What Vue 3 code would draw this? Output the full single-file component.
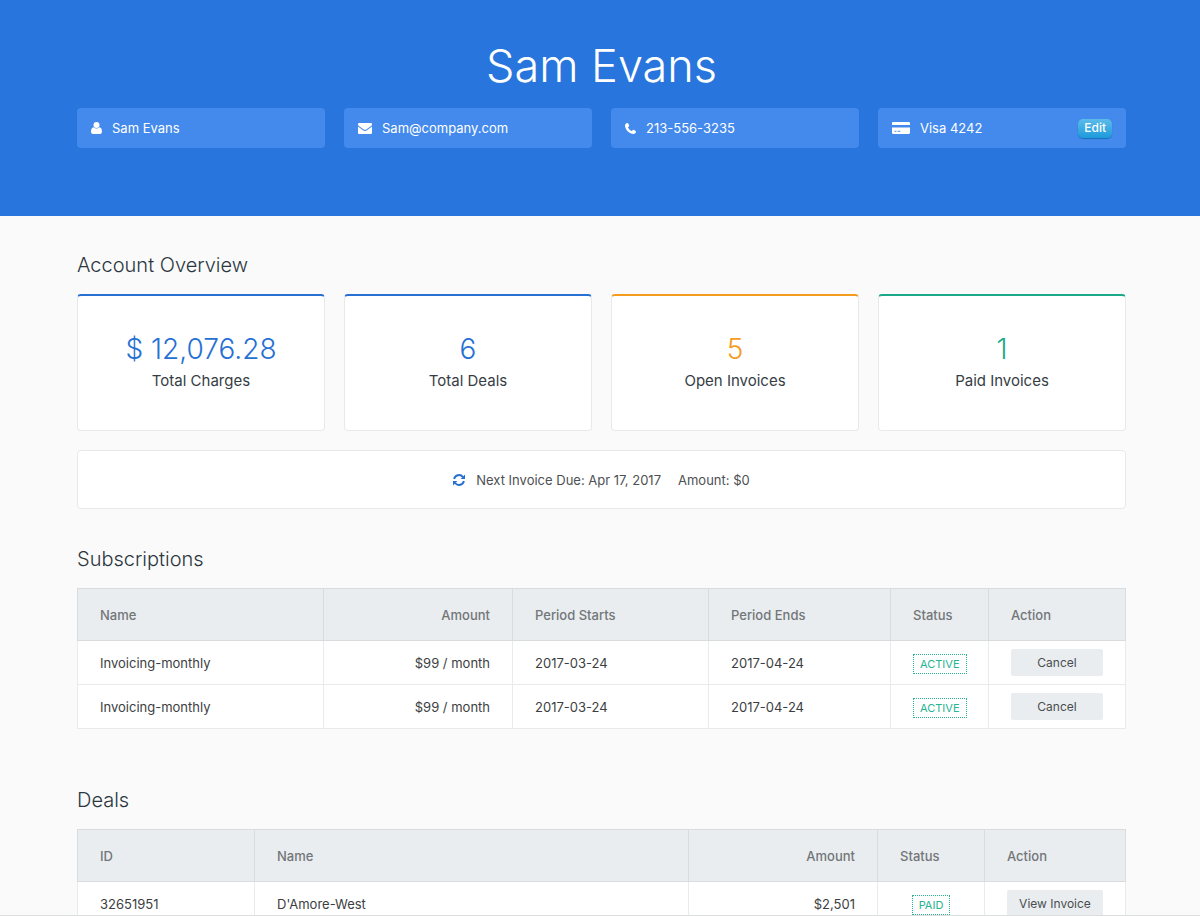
<script setup>
const stats = [
  { value: '$ 12,076.28', label: 'Total Charges', tone: 'blue' },
  { value: '6', label: 'Total Deals', tone: 'blue' },
  { value: '5', label: 'Open Invoices', tone: 'orange' },
  { value: '1', label: 'Paid Invoices', tone: 'green' },
]
const subscriptions = [
  { id: 1, name: 'Invoicing-monthly', amount: '$99 / month', starts: '2017-03-24', ends: '2017-04-24', status: 'ACTIVE' },
  { id: 2, name: 'Invoicing-monthly', amount: '$99 / month', starts: '2017-03-24', ends: '2017-04-24', status: 'ACTIVE' },
]
const deals = [{ id: '32651951', name: "D'Amore-West", amount: '$2,501', status: 'PAID' }]
</script>

<template>
  <div class="page">
    <header class="hero">
      <h1>Sam Evans</h1>
      <ul class="contacts">
        <li>
          <svg class="user" viewBox="0 0 11 12" aria-hidden="true">
            <circle cx="5.5" cy="3" r="3" />
            <path d="M2.6 5.2C1 5.5 0 7 0 9.6 0 11 .8 12 2 12h7c1.200 0 2-1 2-2.400 0-2.600-1-4.100-2.600-4.400a4.200 4.200 0 0 1-5.800 0z" />
          </svg>
          <span>Sam Evans</span>
        </li>
        <li>
          <svg class="mail" viewBox="0 0 14 11" aria-hidden="true">
            <path d="M1.200 0h11.600C13.500 0 14 .5 14 1.200c0 .9-.7 1.700-1.300 2.100L8.300 6.400c-.8.600-1.800.6-2.600 0L1.300 3.300C.7 2.900 0 2.100 0 1.300 0 .5.500 0 1.200 0zM0 3.600l5 3.600c1.200.9 2.800.9 4 0l5-3.600v6.100c0 .7-.6 1.300-1.300 1.300H1.300C.6 11 0 10.400 0 9.700z" />
          </svg>
          <span>Sam@company.com</span>
        </li>
        <li>
          <svg class="phone" viewBox="0 0 11 11" aria-hidden="true">
            <path d="M2.500 0C1.300.2 0 1 0 2.500c0 2 1.200 4.200 2.600 5.700C4.200 9.800 6.500 11 8.500 11c1.500 0 2.300-1.300 2.500-2.500 0-.3-.1-.4-.4-.6L8.600 6.800c-.5-.3-.7 0-1 .4-.3.300-.6.900-1 .8C5.400 7.500 3.500 5.600 3 4.400c-.1-.4.500-.7.800-1 .4-.3.600-.5.400-1L3.100.3C2.900.1 2.800 0 2.500 0z" />
          </svg>
          <span>213-556-3235</span>
        </li>
        <li>
          <svg class="card-icon" viewBox="0 0 18 12" aria-hidden="true">
            <path fill-rule="evenodd" d="M1.200 0h15.600C17.500 0 18 .5 18 1.200V3H0V1.200C0 .5.500 0 1.200 0zM0 5.500h18v5.300c0 .7-.5 1.200-1.200 1.200H1.200C.5 12 0 11.500 0 10.800zM2.500 8.700v1h2v-1zm3.200 0v1h2.600v-1z" />
          </svg>
          <span>Visa 4242</span>
          <button type="button" class="edit">Edit</button>
        </li>
      </ul>
    </header>

    <main>
      <h2>Account Overview</h2>
      <section class="stats" aria-label="Account totals">
        <article v-for="s in stats" :key="s.label" class="stat" :class="s.tone">
          <strong>{{ s.value }}</strong>
          <span>{{ s.label }}</span>
        </article>
      </section>
      <p class="next">
        <svg viewBox="0 0 12 12" aria-hidden="true">
          <path fill="none" stroke="currentColor" stroke-width="1.900" d="M1.100 5A5 5 0 0 1 9.900 3M10.900 7A5 5 0 0 1 2.100 9" />
          <path fill="currentColor" d="M12 .6V5H7.600zM0 11.400V7h4.400z" />
        </svg>
        <span>Next Invoice Due: Apr 17, 2017</span>
        <span class="due">Amount: $0</span>
      </p>

      <h2>Subscriptions</h2>
      <table class="subs">
        <colgroup><col><col class="w189"><col class="w196"><col class="w182"><col class="w98"><col class="w137"></colgroup>
        <thead>
          <tr>
            <th scope="col">Name</th><th scope="col" class="num">Amount</th><th scope="col">Period Starts</th>
            <th scope="col">Period Ends</th><th scope="col">Status</th><th scope="col">Action</th>
          </tr>
        </thead>
        <tbody>
          <tr v-for="r in subscriptions" :key="r.id">
            <td>{{ r.name }}</td><td class="num">{{ r.amount }}</td><td>{{ r.starts }}</td><td>{{ r.ends }}</td>
            <td><span class="tag">{{ r.status }}</span></td>
            <td><button type="button" class="action">Cancel</button></td>
          </tr>
        </tbody>
      </table>

      <h2>Deals</h2>
      <table>
        <colgroup><col class="w177"><col><col class="w189"><col class="w107"><col class="w141"></colgroup>
        <thead>
          <tr>
            <th scope="col">ID</th><th scope="col">Name</th><th scope="col" class="num">Amount</th>
            <th scope="col">Status</th><th scope="col">Action</th>
          </tr>
        </thead>
        <tbody>
          <tr v-for="d in deals" :key="d.id">
            <td>{{ d.id }}</td><td>{{ d.name }}</td><td class="num">{{ d.amount }}</td>
            <td class="center"><span class="tag">{{ d.status }}</span></td>
            <td><button type="button" class="action">View Invoice</button></td>
          </tr>
        </tbody>
      </table>
    </main>
  </div>
</template>

<style>
body {
  margin: 0;
  background: #fafafa;
}
</style>

<style scoped>
.page {
  box-sizing: border-box;
  height: 100vh;
  overflow: hidden;
  border-bottom: 1px solid #dcdddd;
  background: #fafafa;
  color: #3c3e41;
  font: 400 13px/20px Inter, "Liberation Sans", sans-serif;
}
.hero {
  padding: 38px 74px 68px 77px;
  background: #2876dd;
  color: #fff;
}
h1 {
  margin: 0;
  font-size: 45px;
  font-weight: 300;
  line-height: 56px;
  text-align: center;
}
.contacts {
  display: grid;
  grid-template-columns: repeat(4, 1fr);
  gap: 19px;
  margin: 14px 0 0;
  padding: 0;
  list-style: none;
}
.contacts li {
  display: flex;
  align-items: center;
  gap: 10px;
  height: 40px;
  padding: 0 14px;
  border-radius: 4px;
  background: #448aec;
}
.contacts svg {
  fill: #fff;
}
.user {
  width: 11px;
  height: 12px;
}
.mail {
  width: 14px;
  height: 11px;
}
.phone {
  width: 11px;
  height: 11px;
}
.card-icon {
  width: 18px;
  height: 12px;
}
.edit {
  height: 19px;
  margin-left: auto;
  padding: 0 6px;
  border: 0;
  border-radius: 5px;
  background: linear-gradient(#5dbbea, #1c9bdc);
  box-shadow: 0 1px 1px #1a6fb8;
  color: #fff;
  font: 500 12px/18px Inter, sans-serif;
}
main {
  padding: 34px 74px 0 77px;
}
h2 {
  margin: 0 0 14px;
  color: #2b3640;
  font-size: 20px;
  font-weight: 300;
  line-height: 30px;
}
.stats {
  display: grid;
  grid-template-columns: repeat(4, 1fr);
  gap: 19px;
}
.stat {
  display: flex;
  flex-direction: column;
  align-items: center;
  padding: 35px 0 37px;
  border: 1px solid #e8e9ea;
  border-top: 2px solid currentColor;
  border-radius: 4px;
  background: #fff;
}
.stat strong {
  margin-bottom: 1px;
  font-size: 28px;
  font-weight: 300;
  line-height: 36px;
}
.stat span {
  color: #363d44;
  font-size: 15px;
  line-height: 25px;
}
.blue { color: #2670d4; }
.orange { color: #f39c1f; }
.green { color: #1aaa87; }
.next {
  display: flex;
  align-items: center;
  justify-content: center;
  height: 57px;
  margin: 19px 0 35px;
  border: 1px solid #e8e9ea;
  border-radius: 4px;
  background: #fff;
  color: #4e5052;
}
.next svg {
  width: 12px;
  height: 12px;
  margin-right: 11px;
  color: #2670d4;
}
.due {
  margin-left: 17px;
}
table {
  width: 100%;
  border-collapse: collapse;
  table-layout: fixed;
  background: #fff;
}
.subs {
  margin-bottom: 56px;
}
.w98 { width: 98px; }
.w107 { width: 107px; }
.w137 { width: 137px; }
.w141 { width: 141px; }
.w177 { width: 177px; }
.w182 { width: 182px; }
.w189 { width: 189px; }
.w196 { width: 196px; }
th,
td {
  box-sizing: border-box;
  padding: 0 22px;
  border: 1px solid #e8eaeb;
  text-align: left;
  white-space: nowrap;
}
th {
  height: 52px;
  border-color: #d8dcde;
  background: #e9edef;
  color: #737679;
  font-weight: 500;
}
td {
  height: 44px;
}
.num {
  text-align: right;
}
.center {
  text-align: center;
}
.tag {
  display: inline-block;
  margin-top: 2px;
  padding: 0 6px;
  border: 1px dotted #26b491;
  color: #26b491;
  font-size: 11px;
  line-height: 18px;
  vertical-align: middle;
}
.action {
  display: block;
  width: 100%;
  height: 27px;
  padding: 0;
  border: 0;
  border-radius: 2px;
  background: #e9edef;
  color: #4a4d50;
  font: 400 12px/27px Inter, sans-serif;
}
</style>
